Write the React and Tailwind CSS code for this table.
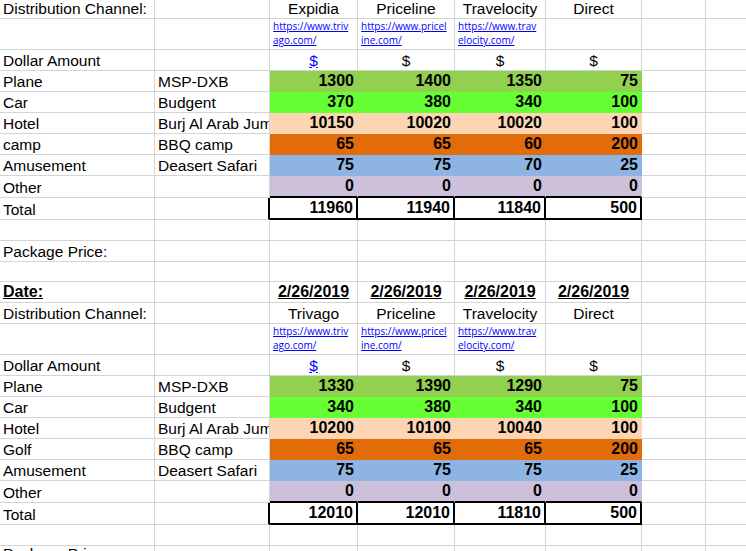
import React from 'react'

// column widths incl. the 1px right gridline
const W = ['w-[155px]', 'w-[115px]', 'w-[88px]', 'w-[97px]', 'w-[91px]', 'w-[96px]', 'w-[64px]', 'w-[140px]']
const GRID = 'border-r border-b border-[#d4d4d4]'

const FILL = {
  plane: 'bg-[#92d050] border-r border-b border-[#92d050]',
  car: 'bg-[#66ff33] border-r border-b border-[#66ff33]',
  hotel: 'bg-[#fcd5b4] border-r border-b border-[#fcd5b4]',
  camp: 'bg-[#e26b0a] border-r border-b border-[#e26b0a]',
  fun: 'bg-[#8db4e2] border-r border-b border-[#8db4e2]',
  other: 'bg-[#ccc0da] border-r border-r-[#ccc0da] border-b-2 border-b-black',
  total: 'border-r-2 border-b-2 border-black',
}

function Cell({ i, cls = GRID, align = 'left', children }) {
  const a =
    align === 'right' ? 'justify-end pr-[3px]' : align === 'center' ? 'justify-center' : 'justify-start pl-[3px]'
  return (
    <div className={`${W[i]} ${a} ${cls} shrink-0 h-full flex items-end pb-[2px] overflow-hidden whitespace-nowrap`}>
      {children}
    </div>
  )
}

function Row({ h, children }) {
  return <div className={`flex ${h}`}>{children}</div>
}

function Blank({ h = 'h-[21px]', label }) {
  return (
    <Row h={h}>
      <Cell i={0}>{label}</Cell>
      {[1, 2, 3, 4, 5, 6, 7].map(i => <Cell key={i} i={i} />)}
    </Row>
  )
}

function Header({ h, label, names }) {
  return (
    <Row h={h}>
      <Cell i={0}>{label}</Cell>
      <Cell i={1} />
      {names.map((n, k) => (
        <Cell key={k} i={k + 2} align="center">{n}</Cell>
      ))}
      <Cell i={6} />
      <Cell i={7} />
    </Row>
  )
}

const LINKS = [
  ['https://www.triv', 'ago.com/'],
  ['https://www.pricel', 'ine.com/'],
  ['https://www.trav', 'elocity.com/'],
]

function Links() {
  return (
    <Row h="h-[31px]">
      <Cell i={0} />
      <Cell i={1} />
      {LINKS.map(([a, b], k) => (
        <Cell key={k} i={k + 2}>
          <a className="font-['Open_Sans',sans-serif] text-[10px] leading-[14px] text-[#0000ff] underline">
            <span className="block">{a}</span>
            <span className="block">{b}</span>
          </a>
        </Cell>
      ))}
      <Cell i={5} />
      <Cell i={6} />
      <Cell i={7} />
    </Row>
  )
}

function Dollar() {
  return (
    <Row h="h-[21px]">
      <Cell i={0}>Dollar Amount</Cell>
      <Cell i={1} />
      <Cell i={2} align="center">
        <a className="text-[#0000ff] underline">$</a>
      </Cell>
      <Cell i={3} align="center">$</Cell>
      <Cell i={4} align="center">$</Cell>
      <Cell i={5} align="center">$</Cell>
      <Cell i={6} />
      <Cell i={7} />
    </Row>
  )
}

function Data({ h = 'h-[21px]', label, sub, vals, fill, bCls = GRID }) {
  return (
    <Row h={h}>
      <Cell i={0}>{label}</Cell>
      <Cell i={1} cls={bCls}>{sub}</Cell>
      {vals.map((v, k) => (
        <Cell key={k} i={k + 2} cls={fill} align="right">
          <span className="font-bold text-[16px]">{v}</span>
        </Cell>
      ))}
      <Cell i={6} />
      <Cell i={7} />
    </Row>
  )
}

function Block({ rows, camp }) {
  return (
    <>
      <Data label="Plane" sub="MSP-DXB" vals={rows[0]} fill={FILL.plane} />
      <Data label="Car" sub="Budgent" vals={rows[1]} fill={FILL.car} />
      <Data label="Hotel" sub="Burj Al Arab Jumeirah" vals={rows[2]} fill={FILL.hotel} />
      <Data label={camp} sub="BBQ camp" vals={rows[3]} fill={FILL.camp} />
      <Data label="Amusement" sub="Deasert Safari" vals={rows[4]} fill={FILL.fun} />
      <Data h="h-[22px]" label="Other" vals={[0, 0, 0, 0]} fill={FILL.other} />
      <Data
        h="h-[22px]"
        label="Total"
        vals={rows[5]}
        fill={FILL.total}
        bCls="border-r-2 border-b border-r-black border-b-[#d4d4d4]"
      />
    </>
  )
}

const CHANNELS = ['Expidia', 'Priceline', 'Travelocity', 'Direct']
const DATE = <span className="font-bold text-[16px] underline">2/26/2019</span>

export default function App() {
  return (
    <div className="w-[746px] h-[551px] overflow-hidden bg-white text-black font-['Liberation_Sans',Arial,sans-serif] text-[15.5px] leading-none">
      <Header h="h-[19px]" label="Distribution Channel:" names={CHANNELS} />
      <Links />
      <Dollar />
      <Block
        camp="camp"
        rows={[
          [1300, 1400, 1350, 75],
          [370, 380, 340, 100],
          [10150, 10020, 10020, 100],
          [65, 65, 60, 200],
          [75, 75, 70, 25],
          [11960, 11940, 11840, 500],
        ]}
      />
      <Blank />
      <Blank label="Package Price:" />
      <Blank h="h-[20px]" />
      <Header
        h="h-[21px]"
        label={<span className="font-bold text-[16px] underline">Date:</span>}
        names={[DATE, DATE, DATE, DATE]}
      />
      <Header h="h-[21px]" label="Distribution Channel:" names={['Trivago', 'Priceline', 'Travelocity', 'Direct']} />
      <Links />
      <Dollar />
      <Block
        camp="Golf"
        rows={[
          [1330, 1390, 1290, 75],
          [340, 380, 340, 100],
          [10200, 10100, 10040, 100],
          [65, 65, 65, 200],
          [75, 75, 75, 25],
          [12010, 12010, 11810, 500],
        ]}
      />
      <Blank />
      <Blank h="h-[18px]" label="Package Price:" />
    </div>
  )
}
